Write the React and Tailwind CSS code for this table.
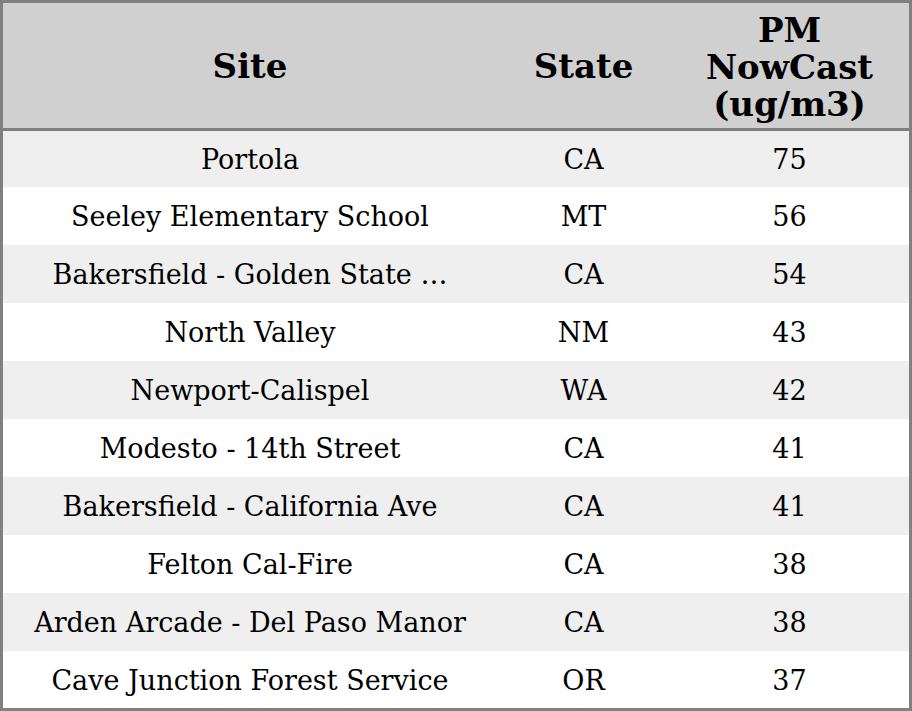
import React from "react";

const rows = [
  { site: "Portola", state: "CA", pm: 75, h: "h-[56px]" },
  { site: "Seeley Elementary School", state: "MT", pm: 56, h: "h-[58px]" },
  { site: "Bakersfield - Golden State …", state: "CA", pm: 54, h: "h-[58px]" },
  { site: "North Valley", state: "NM", pm: 43, h: "h-[58px]" },
  { site: "Newport-Calispel", state: "WA", pm: 42, h: "h-[58px]" },
  { site: "Modesto - 14th Street", state: "CA", pm: 41, h: "h-[58px]" },
  { site: "Bakersfield - California Ave", state: "CA", pm: 41, h: "h-[58px]" },
  { site: "Felton Cal-Fire", state: "CA", pm: 38, h: "h-[58px]" },
  { site: "Arden Arcade - Del Paso Manor", state: "CA", pm: 38, h: "h-[58px]" },
  { site: "Cave Junction Forest Service", state: "OR", pm: 37, h: "h-[57px]" },
];

export default function App() {
  return (
    <div className="w-[912px] h-[711px] bg-white border-[3px] border-[#808080] flex flex-col font-['DejaVu_Serif',serif] text-black">
      {/* header */}
      <div className="h-[128px] shrink-0 bg-[#d0d0d0] border-b-[3px] border-[#808080] grid grid-cols-[494px_173px_239px] items-center text-center font-bold text-[34px] leading-[37px]">
        <div className="pt-[2px]">Site</div>
        <div className="pt-[2px]">State</div>
        <div className="pt-[4px]">
          PM
          <br />
          NowCast
          <br />
          (ug/m3)
        </div>
      </div>

      {rows.map((r, i) => (
        <div
          key={i}
          className={`${r.h} shrink-0 grid grid-cols-[494px_173px_239px] items-center text-center text-[27px] pt-[3px] ${
            i % 2 === 0 ? "bg-[#efefef]" : "bg-white"
          }`}
        >
          <div className="whitespace-nowrap">{r.site}</div>
          <div>{r.state}</div>
          <div>{r.pm}</div>
        </div>
      ))}
    </div>
  );
}
